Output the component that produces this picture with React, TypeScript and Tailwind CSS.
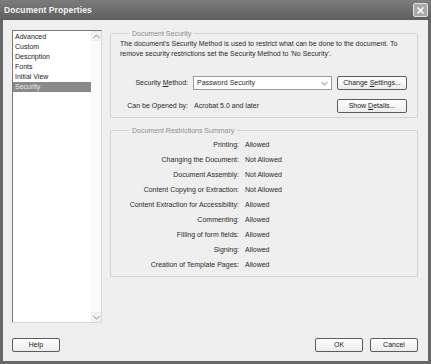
import React from 'react';

const font = "font-['Liberation_Sans',Arial,sans-serif]";

const categories = ['Advanced', 'Custom', 'Description', 'Fonts', 'Initial View', 'Security'];

const restrictions: [string, string][] = [
  ['Printing:', 'Allowed'],
  ['Changing the Document:', 'Not Allowed'],
  ['Document Assembly:', 'Not Allowed'],
  ['Content Copying or Extraction:', 'Not Allowed'],
  ['Content Extraction for Accessibility:', 'Allowed'],
  ['Commenting:', 'Allowed'],
  ['Filling of form fields:', 'Allowed'],
  ['Signing:', 'Allowed'],
  ['Creation of Template Pages:', 'Allowed'],
];

function Chevron({ up = false }: { up?: boolean }) {
  return (
    <svg width="7" height="5" viewBox="0 0 7 5" className="block">
      <path
        d={up ? 'M0.5 4 L3.5 1 L6.5 4' : 'M0.5 1 L3.5 4 L6.5 1'}
        fill="none"
        stroke="#b8b8b8"
        strokeWidth="1.3"
      />
    </svg>
  );
}

function Btn({ children, w }: { children: React.ReactNode; w: string }) {
  return (
    <button
      className={`${w} h-[14px] rounded-[2px] border border-[#5c5c5c] bg-gradient-to-b from-white to-[#ececec] text-[7px] leading-[12px] text-[#222] flex items-center justify-center`}
    >
      <span className="whitespace-pre">{children}</span>
    </button>
  );
}

export default function App() {
  return (
    <div className={`w-[431px] h-[364px] flex flex-col bg-[#686868] ${font}`}>
      {/* title bar */}
      <div className="h-[20px] flex items-center justify-between pl-[4px] pr-[3px] bg-gradient-to-b from-[#7c7c7c] to-[#5e5e5e]">
        <span className="text-[8.5px] font-bold text-[#f4f4f4] tracking-[0.1px]">Document Properties</span>
        <div className="w-[15px] h-[14px] rounded-[2px] border border-[#e0e0e0] bg-[#a9a9a9] flex items-center justify-center">
          <svg width="9" height="9" viewBox="0 0 9 9">
            <path d="M1.5 1.5 L7.5 7.5 M7.5 1.5 L1.5 7.5" stroke="white" strokeWidth="1.6" />
          </svg>
        </div>
      </div>

      {/* body */}
      <div className="flex-1 mx-[3px] mb-[3px] bg-[#efefef] flex flex-col pl-[9px] pr-[10px] pt-[10px] pb-[9px] text-[7px] text-[#2a2a2a]">
        <div className="flex-1 flex gap-[8px]">
          {/* category list */}
          <div className="w-[90px] border border-[#7a7a7a] border-r-[#d8d8d8] border-b-[#d8d8d8] bg-white flex">
            <div className="flex-1 pt-[1px]">
              {categories.map((c) => (
                <div
                  key={c}
                  className={`h-[10px] leading-[10px] pl-[2px] ${c === 'Security' ? 'bg-[#8a8a8a] text-[#ececec]' : 'text-[#1a1a1a]'}`}
                >
                  {c}
                </div>
              ))}
            </div>
            <div className="w-[10px] flex flex-col justify-between bg-[#fafafa]">
              <div className="h-[10px] bg-[#f4f4f4] border border-[#ececec] flex items-center justify-center">
                <Chevron up />
              </div>
              <div className="h-[10px] bg-[#f4f4f4] border border-[#ececec] flex items-center justify-center">
                <Chevron />
              </div>
            </div>
          </div>

          {/* right side */}
          <div className="flex-1 flex flex-col">
            <fieldset className="border border-[#d3d3d3] rounded-[2px] pl-[9px] pr-[10px] pb-[4px]">
              <legend className="ml-[9px] px-[3px] leading-[7px] text-[#8d8d8d]">Document Security</legend>
              <p className="leading-[10px] mt-[2px]">
                The document's Security Method is used to restrict what can be done to the document. To
                <br />
                remove security restrictions set the Security Method to 'No Security'.
              </p>
              <div className="mt-[17px] flex items-center h-[14px]">
                <span className="w-[68px] text-right">
                  Security <span className="underline">M</span>ethod:
                </span>
                <div className="ml-[5px] w-[139px] h-[14px] bg-white border border-[#9c9c9c] flex items-center justify-between pl-[3px] pr-[3px]">
                  <span>Password Security</span>
                  <Chevron />
                </div>
                <div className="ml-[5px]">
                  <Btn w="w-[70px]">
                    Change <span className="underline">S</span>ettings...
                  </Btn>
                </div>
              </div>
              <div className="mt-[9px] flex items-center h-[14px]">
                <span className="w-[68px] text-right">Can be Opened by:</span>
                <span className="ml-[6px] w-[138px]">Acrobat 5.0 and later</span>
                <div className="ml-[5px]">
                  <Btn w="w-[70px]">
                    Show <span className="underline">D</span>etails...
                  </Btn>
                </div>
              </div>
            </fieldset>

            <fieldset className="mt-[9px] border border-[#d3d3d3] rounded-[2px] pl-[9px] pb-[3px]">
              <legend className="ml-[9px] px-[3px] leading-[7px] text-[#8d8d8d]">
                Document Restrictions Summary
              </legend>
              <div className="mt-[4px]">
                {restrictions.map(([label, value]) => (
                  <div key={label} className="flex h-[15px] items-center">
                    <span className="w-[119px] text-right whitespace-nowrap">{label}</span>
                    <span className="ml-[6px]">{value}</span>
                  </div>
                ))}
              </div>
            </fieldset>
          </div>
        </div>

        {/* footer buttons */}
        <div className="mt-[15px] flex items-center justify-between">
          <Btn w="w-[48px]">Help</Btn>
          <div className="flex gap-[7px]">
            <Btn w="w-[48px]">OK</Btn>
            <Btn w="w-[48px]">Cancel</Btn>
          </div>
        </div>
      </div>
    </div>
  );
}
